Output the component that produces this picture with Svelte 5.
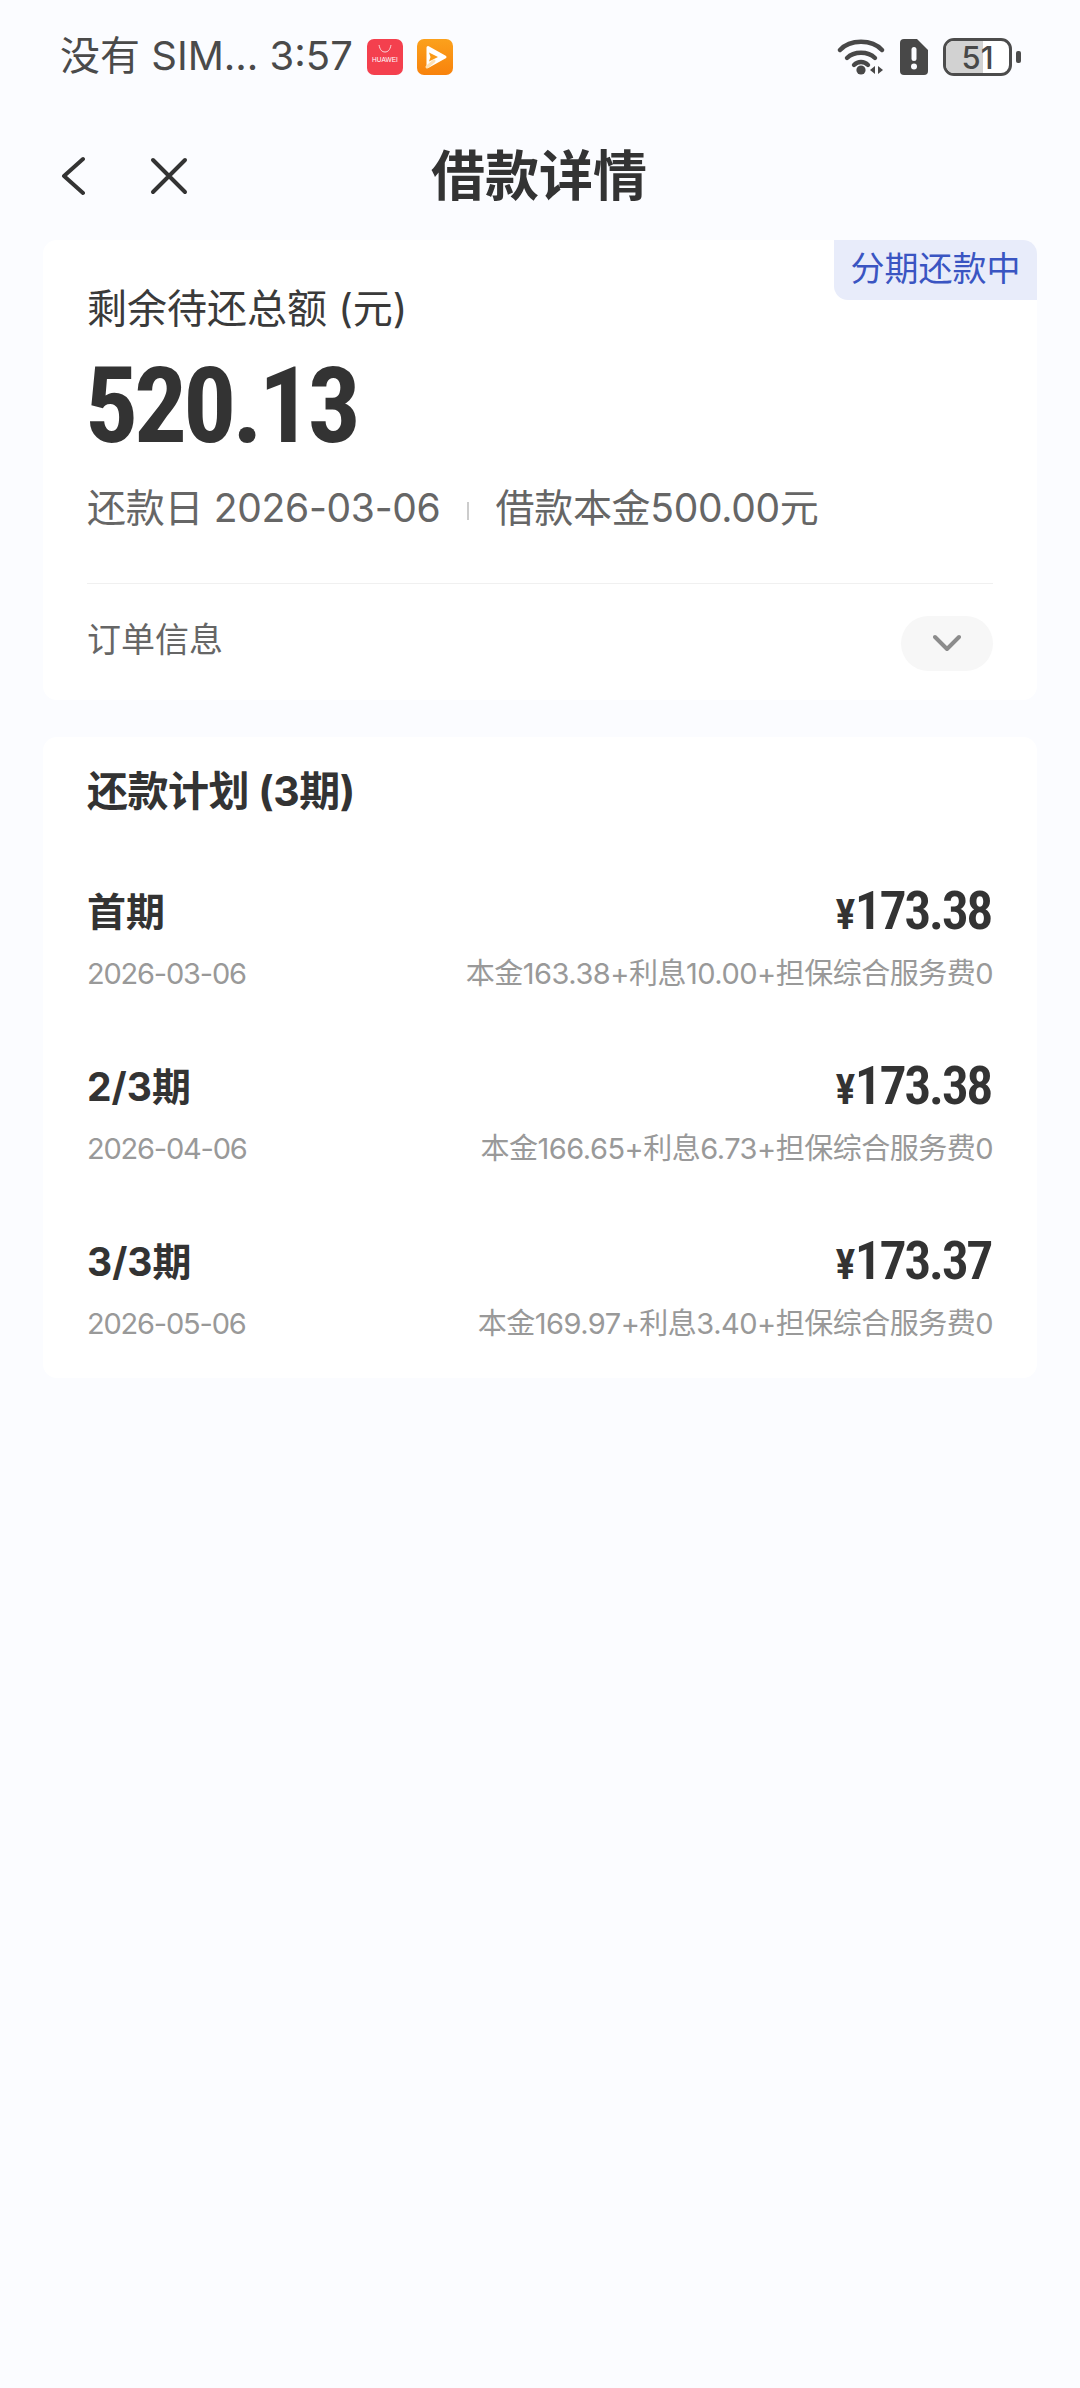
<script>
  const plans = [
    { name: '首期', amount: '173.38', date: '2026-03-06', detail: '本金163.38+利息10.00+担保综合服务费0' },
    { name: '2/3期', amount: '173.38', date: '2026-04-06', detail: '本金166.65+利息6.73+担保综合服务费0' },
    { name: '3/3期', amount: '173.37', date: '2026-05-06', detail: '本金169.97+利息3.40+担保综合服务费0' }
  ];
</script>

<div class="page">
  <div class="status-bar">
    <div class="status-left">
      <span class="carrier">没有 SIM... 3:57</span>
      <svg class="app-icon" viewBox="0 0 36 36" width="36" height="36">
        <rect width="36" height="36" rx="7" fill="#f4404e" />
        <path d="M12 6c1 5 3 7 6 7s5-2 6-7" fill="none" stroke="#fbd5d8" stroke-width="1" />
        <text x="18" y="23" text-anchor="middle" class="huawei">HUAWEI</text>
      </svg>
      <svg class="app-icon" viewBox="0 0 36 36" width="36" height="36">
        <defs>
          <linearGradient id="play" x1="0" y1="0" x2="0" y2="1">
            <stop offset="0" stop-color="#fba11c" />
            <stop offset="1" stop-color="#f8820c" />
          </linearGradient>
        </defs>
        <rect width="36" height="36" rx="7" fill="url(#play)" />
        <path d="M11 8.500l17 9.500-17 9.500z" fill="#fff" stroke="#fff" stroke-width="3" stroke-linejoin="round" />
        <path d="M12 13.500l9 4.500-9 4.500 1.500-4.500z" fill="#fa9a18" />
        <path d="M10 28l7-6" stroke="#fde0b5" stroke-width="3" stroke-linecap="round" />
      </svg>
    </div>
    <div class="status-right">
      <svg viewBox="0 0 48 38" width="48" height="38">
        <g fill="none" stroke="#484848" stroke-width="4.400" stroke-linecap="round">
          <path d="M3 12C13 1 35 1 45 12" />
          <path d="M10 20c7-7 21-7 28 0" />
          <path d="M17 27c4-4 10-4 14 0" />
        </g>
        <circle cx="24" cy="32" r="4.600" fill="#484848" />
        <path d="M38 28v8l-5-4zM41 28v8l5-4z" fill="#484848" />
      </svg>
      <svg viewBox="0 0 28 36" width="28" height="36">
        <path d="M4 0h13l11 11v21a4 4 0 0 1-4 4H4a4 4 0 0 1-4-4V4a4 4 0 0 1 4-4z" fill="#484848" />
        <rect x="11.500" y="8" width="5" height="14" rx="2.500" fill="#fbfcff" />
        <circle cx="14" cy="27.500" r="3" fill="#fbfcff" />
      </svg>
      <div class="battery">
        <div class="battery-body">
          <div class="battery-level"></div>
          <span>51</span>
        </div>
        <div class="battery-cap"></div>
      </div>
    </div>
  </div>

  <div class="nav-bar">
    <div class="nav-icons">
      <svg viewBox="0 0 24 40" width="24" height="40">
        <path d="M22 3L3 20l19 17" fill="none" stroke="#333" stroke-width="4" stroke-linecap="round" stroke-linejoin="round" />
      </svg>
      <svg viewBox="0 0 38 38" width="38" height="38">
        <path d="M3 3l32 32M35 3L3 35" fill="none" stroke="#333" stroke-width="4" stroke-linecap="round" />
      </svg>
    </div>
    <h1>借款详情</h1>
  </div>

  <section class="card summary">
    <div class="badge">分期还款中</div>
    <div class="summary-label">剩余待还总额 (元)</div>
    <div class="summary-amount">520.13</div>
    <div class="summary-meta">
      <span>还款日 2026-03-06</span>
      <i class="sep"></i>
      <span>借款本金500.00元</span>
    </div>
    <div class="order-row">
      <span class="order-label">订单信息</span>
      <button class="expand" aria-label="展开">
        <svg viewBox="0 0 28 18" width="28" height="18">
          <path d="M2 3l12 12L26 3" fill="none" stroke="#8c8c8c" stroke-width="4" stroke-linecap="round" stroke-linejoin="round" />
        </svg>
      </button>
    </div>
  </section>

  <section class="card plan">
    <h2>还款计划 (3期)</h2>
    {#each plans as p}
      <div class="plan-row">
        <div class="plan-top">
          <span class="plan-name">{p.name}</span>
          <span class="plan-amount"><small>¥</small>{p.amount}</span>
        </div>
        <div class="plan-bottom">
          <span class="plan-date">{p.date}</span>
          <span class="plan-detail">{p.detail}</span>
        </div>
      </div>
    {/each}
  </section>
</div>

<style>
  :global(body) {
    margin: 0;
    background: #fbfcff;
  }

  .page {
    min-height: 2388px;
    background: #fbfcff;
    font-family: Inter, "Noto Sans CJK SC", sans-serif;
    color: #333;
    display: flex;
    flex-direction: column;
    box-sizing: border-box;
  }

  .status-bar {
    height: 114px;
    padding: 0 59px 0 60px;
    display: flex;
    align-items: center;
    justify-content: space-between;
    box-sizing: border-box;
  }

  .status-left {
    display: flex;
    align-items: center;
    gap: 14px;
  }

  .carrier {
    font-size: 40px;
    line-height: 50px;
    color: #4a4a4a;
    margin-top: -3px;
  }

  .huawei {
    font-size: 6.500px;
    fill: #fff;
    font-family: "Liberation Sans", sans-serif;
  }

  .status-right {
    display: flex;
    align-items: center;
    gap: 15px;
  }

  .battery {
    display: flex;
    align-items: center;
    gap: 4px;
  }

  .battery-body {
    position: relative;
    width: 69px;
    height: 38px;
    border: 3px solid #4c4c4c;
    border-radius: 11px;
    box-sizing: border-box;
    overflow: hidden;
    display: flex;
    align-items: center;
    justify-content: center;
    background: #fff;
  }

  .battery-level {
    position: absolute;
    left: 0;
    top: 0;
    bottom: 0;
    width: 58%;
    background: #d2d2d2;
  }

  .battery-body span {
    position: relative;
    font-size: 31px;
    font-weight: 500;
    color: #484848;
  }

  .battery-cap {
    width: 5px;
    height: 12px;
    border-radius: 2px;
    background: #4c4c4c;
  }

  .nav-bar {
    height: 126px;
    position: relative;
    display: flex;
    justify-content: center;
    align-items: center;
  }

  .nav-icons {
    position: absolute;
    left: 61px;
    top: 0;
    bottom: 2px;
    display: flex;
    align-items: center;
    gap: 65px;
  }

  h1 {
    margin: -10px 2px 0 0;
    font-size: 54px;
    font-weight: 700;
    color: #333;
  }

  .card {
    margin: 0 43px;
    background: #fff;
    border-radius: 14px;
    box-sizing: border-box;
    padding: 0 44px;
  }

  .summary {
    position: relative;
    height: 460px;
    padding-top: 44px;
  }

  .badge {
    position: absolute;
    top: 0;
    right: 0;
    width: 203px;
    height: 60px;
    background: #e8ecfa;
    color: #3a55c2;
    font-size: 34px;
    line-height: 58px;
    text-align: center;
    border-radius: 0 14px 0 14px;
  }

  .summary-label {
    font-size: 40px;
    line-height: 50px;
    color: #3a3a3a;
  }

  .summary-amount {
    font-family: Roboto, sans-serif;
    font-stretch: 80%;
    font-size: 105px;
    font-weight: 700;
    line-height: 122px;
    letter-spacing: -4px;
    margin-top: 12px;
    margin-left: -2px;
    color: #333;
  }

  .summary-meta {
    margin-top: 13px;
    font-size: 39px;
    line-height: 54px;
    letter-spacing: -0.300px;
    color: #666;
    display: flex;
    align-items: center;
  }

  .sep {
    width: 2px;
    height: 18px;
    margin: 6px 26px 0 27px;
    background: #ccc;
  }

  .order-row {
    margin-top: 48px;
    border-top: 1px solid #f0f0f0;
    height: 116px;
    display: flex;
    align-items: center;
    justify-content: space-between;
    font-size: 34px;
    color: #666;
  }

  .order-label {
    margin-bottom: 10px;
  }

  .expand {
    width: 92px;
    height: 55px;
    margin-top: 2px;
    border: none;
    border-radius: 28px;
    background: #f7f7f7;
    display: flex;
    align-items: center;
    justify-content: center;
    padding: 0;
  }

  .plan {
    margin-top: 37px;
    height: 641px;
    padding-top: 29px;
  }

  h2 {
    margin: 0 0 58px;
    font-size: 41px;
    line-height: 50px;
    font-weight: 700;
    letter-spacing: -0.500px;
    color: #333;
  }

  .plan-row {
    height: 175px;
  }

  .plan-top {
    display: flex;
    align-items: center;
    justify-content: space-between;
    height: 70px;
  }

  .plan-name {
    font-size: 39px;
    font-weight: 700;
  }

  .plan-amount {
    font-family: Roboto, sans-serif;
    font-stretch: 80%;
    font-size: 54px;
    font-weight: 600;
    letter-spacing: -2.500px;
    margin-top: 2px;
    margin-right: 2px;
  }

  .plan-amount small {
    font-size: 42px;
    margin-right: 2px;
  }

  .plan-bottom {
    display: flex;
    justify-content: space-between;
    font-size: 29px;
    line-height: 44px;
    color: #999;
    margin-top: 8px;
  }

  .plan-date {
    letter-spacing: -1.200px;
  }

  .plan-detail {
    letter-spacing: -0.500px;
  }
</style>
